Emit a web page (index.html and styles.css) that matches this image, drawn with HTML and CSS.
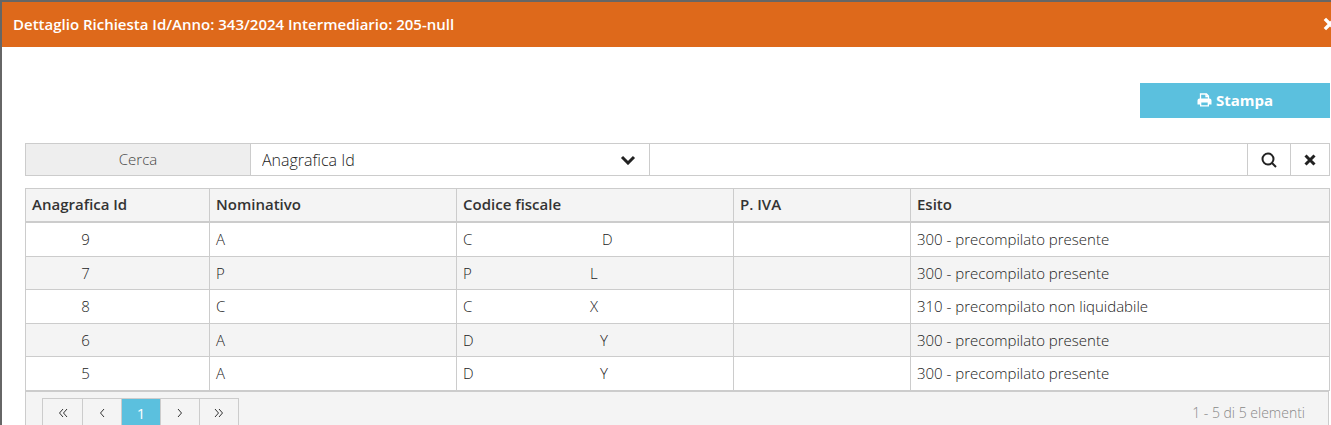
FILE: index.html
```html
<!DOCTYPE html>
<html lang="it">
<head>
  <meta charset="UTF-8">
  <meta name="viewport" content="width=device-width, initial-scale=1.0">
  <title>Dettaglio Richiesta</title>
  <link rel="stylesheet" href="styles.css">
</head>
<body>
  <div class="modal">
    <div class="modal-header">
      <h1>Dettaglio Richiesta Id/Anno: 343/2024 Intermediario: 205-null</h1>
      <button type="button" class="close" aria-label="Chiudi">
        <svg viewBox="0 0 14 14" width="16" height="16"><path d="M2.500 2.500l9 9M11.500 2.500l-9 9"/></svg>
      </button>
    </div>

    <div class="modal-body">
      <div class="toolbar">
        <button type="button" class="btn-print">
          <svg viewBox="0 0 15 14" width="15" height="14">
            <path d="M3.5 6V1h6l2 2v3M9 1v2.5h2.5" fill="none" stroke="currentColor" stroke-width="1.3"/>
            <path fill="currentColor" fill-rule="evenodd" d="M2.5 5.5h10A2 2 0 0 1 14.500 7.500V11.500H12V13.500H3V11.500H.5V7.500A2 2 0 0 1 2.500 5.500zM4.300 9.500V12.300H10.700V9.500z"/>
          </svg>
          Stampa
        </button>
      </div>

      <form class="search">
        <label for="campo">Cerca</label>
        <div class="select-wrap">
          <select id="campo">
            <option>Anagrafica Id</option>
            <option>Nominativo</option>
            <option>Codice fiscale</option>
          </select>
          <svg class="chevron" viewBox="0 0 16 10" width="16" height="10"><path d="M2 2l6 6 6-6"/></svg>
        </div>
        <input type="text" aria-label="Testo da cercare">
        <button type="button" class="btn-search" aria-label="Cerca">
          <svg viewBox="0 0 16 16" width="16" height="16"><circle cx="7" cy="7" r="5.500"/><path d="M11 11l4 4"/></svg>
        </button>
        <button type="button" class="btn-clear" aria-label="Annulla">
          <svg viewBox="0 0 14 14" width="14" height="14"><path d="M2.500 2.500l9 9M11.500 2.500l-9 9"/></svg>
        </button>
      </form>

      <table>
        <colgroup>
          <col class="col-id">
          <col class="col-nome">
          <col class="col-cf">
          <col class="col-iva">
          <col>
        </colgroup>
        <thead>
          <tr>
            <th>Anagrafica Id</th>
            <th>Nominativo</th>
            <th>Codice fiscale</th>
            <th>P. IVA</th>
            <th>Esito</th>
          </tr>
        </thead>
        <tbody>
          <tr>
            <td class="id">9</td>
            <td>A</td>
            <td><span class="cf cf-l">C</span>D</td>
            <td></td>
            <td>300 - precompilato presente</td>
          </tr>
          <tr>
            <td class="id">7</td>
            <td>P</td>
            <td><span class="cf cf-s">P</span>L</td>
            <td></td>
            <td>300 - precompilato presente</td>
          </tr>
          <tr>
            <td class="id">8</td>
            <td>C</td>
            <td><span class="cf cf-s">C</span>X</td>
            <td></td>
            <td>310 - precompilato non liquidabile</td>
          </tr>
          <tr>
            <td class="id">6</td>
            <td>A</td>
            <td><span class="cf cf-m">D</span>Y</td>
            <td></td>
            <td>300 - precompilato presente</td>
          </tr>
          <tr>
            <td class="id">5</td>
            <td>A</td>
            <td><span class="cf cf-m">D</span>Y</td>
            <td></td>
            <td>300 - precompilato presente</td>
          </tr>
        </tbody>
      </table>

      <div class="table-footer">
        <nav class="pager">
          <a href="#" aria-label="Prima"><svg viewBox="0 0 10 10" width="10" height="10"><path d="M5 1L1.500 5L5 9M9 1L5.500 5L9 9"/></svg></a>
          <a href="#" aria-label="Precedente"><svg viewBox="0 0 10 10" width="10" height="10"><path d="M7 1L3.500 5L7 9"/></svg></a>
          <a href="#" class="active">1</a>
          <a href="#" aria-label="Successiva"><svg viewBox="0 0 10 10" width="10" height="10"><path d="M3 1L6.500 5L3 9"/></svg></a>
          <a href="#" aria-label="Ultima"><svg viewBox="0 0 10 10" width="10" height="10"><path d="M1 1L4.500 5L1 9M5 1L8.500 5L5 9"/></svg></a>
        </nav>
        <span class="count">1 - 5 di 5 elementi</span>
      </div>
    </div>
  </div>
</body>
</html>
```
FILE: styles.css
```css
* {
  box-sizing: border-box;
}

html, body {
  height: 100%;
  margin: 0;
  overflow: hidden;
}

body {
  padding: 2px 0 0 2px;
  background: #666;
  color: #222;
  font-family: "Open Sans", sans-serif;
  font-size: 15px;
  font-weight: 300;
  line-height: 20px;
}

button, input, select {
  font: inherit;
  color: inherit;
}

button {
  display: flex;
  align-items: center;
  justify-content: center;
  padding: 0;
  cursor: pointer;
}

.modal {
  min-height: 100%;
  background: #fff;
}

.modal-header {
  display: flex;
  align-items: center;
  justify-content: space-between;
  height: 45px;
  padding: 0 0 1px 11px;
  background: #de691b;
  color: #fff;
}

.modal-header h1 {
  margin: 0;
  font-size: 15px;
  font-weight: 600;
}

.close {
  flex: none;
  margin-right: -7px;
  border: none;
  background: none;
}

.close svg,
.search svg {
  fill: none;
  stroke: currentColor;
  stroke-width: 3;
}

.modal-body {
  padding: 36px 1px 0 23px;
}

.toolbar {
  display: flex;
  justify-content: flex-end;
  margin-bottom: 25px;
}

.btn-print {
  gap: 4px;
  width: 190px;
  height: 35px;
  padding-bottom: 1px;
  border: none;
  background: #5bc0de;
  color: #fff;
  font-weight: 700;
}

/* search bar */
.search {
  display: flex;
  height: 33px;
  margin-bottom: 12px;
  border: 1px solid #ccc;
}

.search > * + * {
  border: none;
  border-left: 1px solid #ccc;
  background: #fff;
}

.search label {
  width: 224px;
  line-height: 31px;
  text-align: center;
  background: #eee;
  color: #444;
}

.select-wrap {
  position: relative;
  width: 399px;
}

.select-wrap select {
  width: 100%;
  height: 100%;
  padding: 0 36px 0 11px;
  border: none;
  background: none;
  font-size: 16px;
  appearance: none;
}

.chevron {
  position: absolute;
  top: 11px;
  right: 13px;
  pointer-events: none;
}

.search input {
  flex: 1;
  min-width: 0;
  padding: 0 11px;
}

.search .btn-search {
  width: 43px;
}

.search .btn-search svg {
  stroke-width: 2;
}

.search .btn-clear {
  width: 39px;
}

/* results */
table {
  width: 100%;
  border-collapse: collapse;
  table-layout: fixed;
}

.col-id { width: 184px; }
.col-nome { width: 247px; }
.col-cf { width: 277px; }
.col-iva { width: 177px; }

th, td {
  padding: 6px;
  border: 1px solid #ccc;
  text-align: left;
}

th {
  padding: 5px 6px 7px;
  border-bottom-width: 2px;
  background: #f4f4f4;
  color: #333;
  font-weight: 600;
}

tbody tr:nth-child(odd) td {
  padding-bottom: 7px;
}

tbody tr:nth-child(even) {
  background: #f4f4f4;
}

td.id {
  padding-right: 70px;
  text-align: center;
}

.cf {
  display: inline-block;
}

.cf-s { width: 127px; }
.cf-m { width: 137px; }
.cf-l { width: 139px; }

.table-footer {
  display: flex;
  align-items: center;
  justify-content: space-between;
  margin-right: 1px;
  padding: 6px 23px 7px 16px;
  border: 1px solid #ccc;
  background: #f4f4f4;
}

.pager {
  display: flex;
  border: 1px solid #ccc;
}

.pager a {
  display: flex;
  align-items: center;
  justify-content: center;
  width: 39px;
  height: 28px;
  color: #333;
  text-decoration: none;
}

.pager a + a {
  border-left: 1px solid #ccc;
}

.pager .active {
  background: #5bc0de;
  color: #fff;
  font-weight: 400;
}

.pager svg {
  fill: none;
  stroke: currentColor;
}

.count {
  color: #888;
  font-size: 14px;
}
```
